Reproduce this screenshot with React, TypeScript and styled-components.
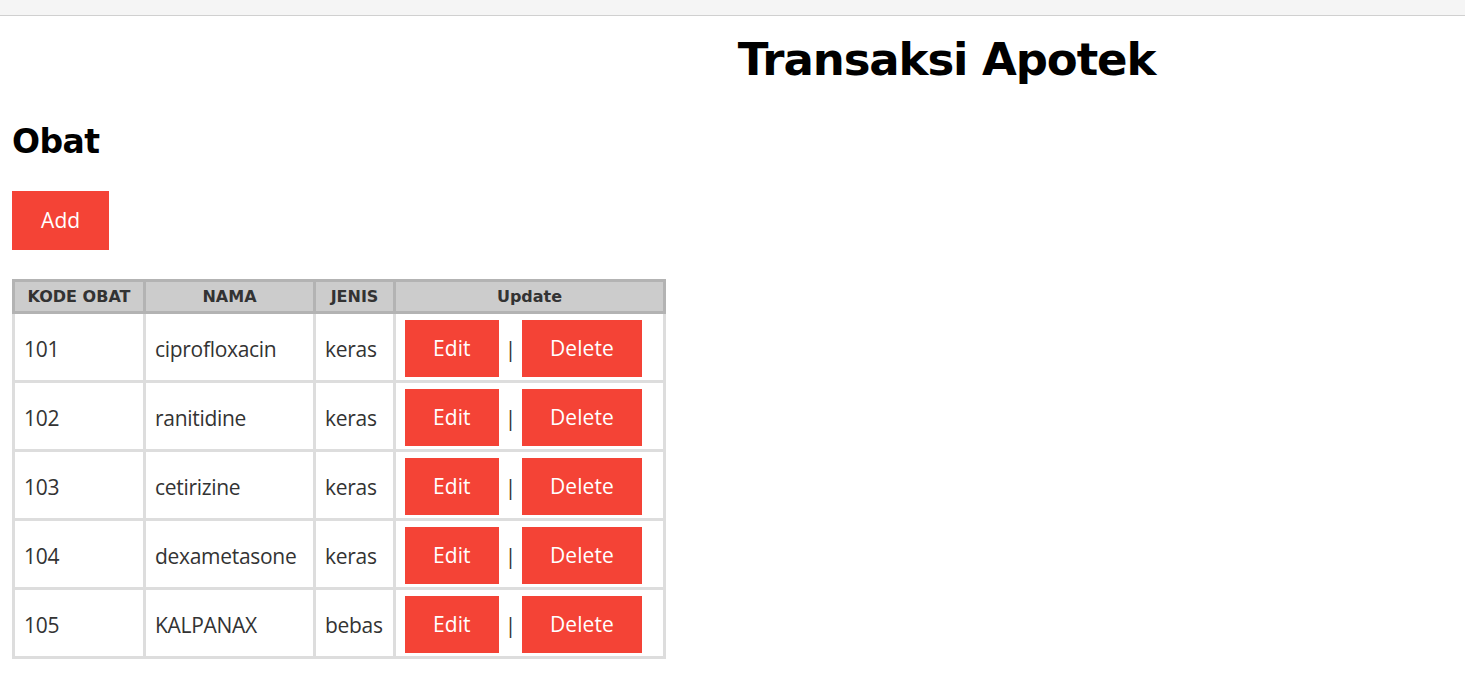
import React from "react";
import styled, { createGlobalStyle } from "styled-components";

const GlobalStyle = createGlobalStyle`
  html, body {
    margin: 0;
    padding: 0;
    background: #fff;
  }
  body {
    font-family: "Open Sans", "Noto Sans", sans-serif;
    color: #333;
  }
`;

const red = "#f44336";

const TopBar = styled.div`
  height: 15px;
  background: #f5f5f5;
  border-bottom: 1px solid #d0d0d0;
`;

const Page = styled.div`
  padding: 0 12px;
`;

const Title = styled.h1`
  margin: 18px 0 0;
  padding-left: 428px;
  text-align: center;
  font-family: "DejaVu Sans", Verdana, sans-serif;
  font-weight: bold;
  font-size: 45px;
  line-height: 52px;
  letter-spacing: -1.1px;
  color: #000;
`;

const Heading = styled.h2`
  margin: 36px 0 0;
  font-family: "DejaVu Sans", Verdana, sans-serif;
  font-weight: bold;
  font-size: 33px;
  line-height: 40px;
  letter-spacing: -0.6px;
  color: #000;
`;

const Button = styled.button<{ $tall?: boolean }>`
  display: inline-block;
  border: none;
  background: ${red};
  color: #fff;
  font-family: "Open Sans", "Noto Sans", sans-serif;
  font-size: 21px;
  line-height: 29px;
  padding: ${(p) => (p.$tall ? "15px 29px" : "14px 28px")};
  cursor: pointer;
  letter-spacing: 0.1px;
`;

const Toolbar = styled.div`
  margin-top: 29px;
  display: flex;
`;

const Table = styled.table`
  margin-top: 29px;
  border-collapse: separate;
  border-spacing: 0;
  table-layout: fixed;
  width: 654px;
`;

const Th = styled.th<{ $w: number }>`
  box-sizing: border-box;
  width: ${(p) => p.$w}px;
  background: #ccc;
  border-top: 3px solid #b3b3b3;
  border-right: 3px solid #b3b3b3;
  border-bottom: 3px solid #b3b3b3;
  &:first-child {
    border-left: 3px solid #b3b3b3;
  }
  padding: 0;
  height: 35px;
  font-family: "DejaVu Sans", Verdana, sans-serif;
  font-weight: bold;
  font-size: 16px;
  line-height: 29px;
  color: #333;
  text-align: center;
`;

const Td = styled.td`
  box-sizing: border-box;
  border-right: 3px solid #ddd;
  border-bottom: 3px solid #ddd;
  &:first-child {
    border-left: 3px solid #ddd;
  }
  padding: 6px 9px 3px;
  height: 69px;
  font-size: 21px;
  letter-spacing: -0.3px;
  color: #333;
  vertical-align: middle;
`;

const Actions = styled.div`
  display: flex;
  align-items: center;
  gap: 6px;
`;

const Sep = styled.span`
  font-size: 21px;
  color: #333;
`;

const obat = [
  { kode: "101", nama: "ciprofloxacin", jenis: "keras" },
  { kode: "102", nama: "ranitidine", jenis: "keras" },
  { kode: "103", nama: "cetirizine", jenis: "keras" },
  { kode: "104", nama: "dexametasone", jenis: "keras" },
  { kode: "105", nama: "KALPANAX", jenis: "bebas" },
];

export default function App() {
  return (
    <>
      <GlobalStyle />
      <TopBar />
      <Page>
        <Title>Transaksi Apotek</Title>
        <Heading>Obat</Heading>
        <Toolbar>
          <Button $tall>Add</Button>
        </Toolbar>
        <Table>
          <thead>
            <tr>
              <Th $w={134}>KODE OBAT</Th>
              <Th $w={170}>NAMA</Th>
              <Th $w={80}>JENIS</Th>
              <Th $w={270}>Update</Th>
            </tr>
          </thead>
          <tbody>
            {obat.map((o) => (
              <tr key={o.kode}>
                <Td>{o.kode}</Td>
                <Td>{o.nama}</Td>
                <Td>{o.jenis}</Td>
                <Td>
                  <Actions>
                    <Button>Edit</Button>
                    <Sep>|</Sep>
                    <Button>Delete</Button>
                  </Actions>
                </Td>
              </tr>
            ))}
          </tbody>
        </Table>
      </Page>
    </>
  );
}
